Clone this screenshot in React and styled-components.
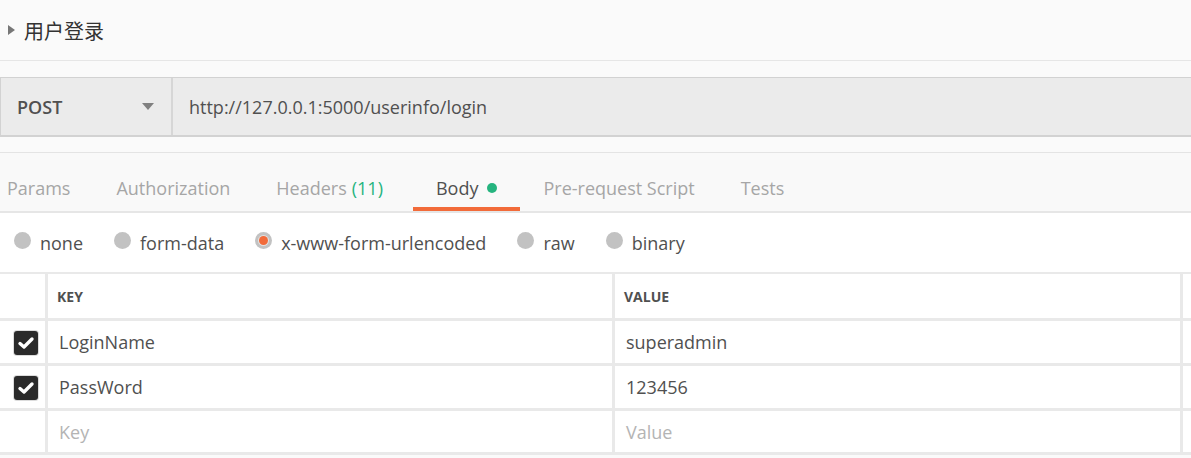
import styled, { createGlobalStyle } from 'styled-components'

const GlobalStyle = createGlobalStyle`
  html, body {
    margin: 0;
    padding: 0;
    background: #fafafa;
    font-family: "Open Sans", "Liberation Sans", sans-serif;
  }
  * { box-sizing: border-box; }
`

const Page = styled.div`
  width: 100%;
  overflow: hidden;
`

// ---- title ----
const TitleBar = styled.div`
  height: 61px;
  display: flex;
  align-items: center;
  padding-left: 8px;
  border-bottom: 1px solid #e6e6e6;
`
const Caret = styled.span`
  width: 0;
  height: 0;
  border-top: 5px solid transparent;
  border-bottom: 5px solid transparent;
  border-left: 7px solid #777;
  margin-right: 9px;
`
const Title = styled.span`
  font-family: "Noto Sans CJK SC", "Open Sans", sans-serif;
  font-size: 20px;
  color: #333;
`

// ---- request bar ----
const RequestSection = styled.div`
  padding: 16px 0 15px;
  border-bottom: 1px solid #e4e4e4;
`
const RequestBar = styled.div`
  height: 60px;
  display: flex;
  background: #ebebeb;
  border-top: 1px solid #d2d2d2;
  border-bottom: 2px solid #d2d2d2;
  border-left: 1px solid #d2d2d2;
`
const Method = styled.div`
  width: 172px;
  display: flex;
  align-items: center;
  justify-content: space-between;
  padding: 0 17px 0 16px;
  font-size: 18px;
  font-weight: 600;
  color: #505050;
  border-right: 2px solid #d6d6d6;
`
const DropArrow = styled.span`
  width: 0;
  height: 0;
  border-left: 6px solid transparent;
  border-right: 6px solid transparent;
  border-top: 7px solid #808080;
`
const Url = styled.div`
  flex: 1;
  display: flex;
  align-items: center;
  padding-left: 16px;
  font-size: 18px;
  color: #505050;
`

// ---- tabs ----
const TabBar = styled.div`
  height: 60px;
  display: flex;
  background: #f9f9f9;
  border-bottom: 2px solid #e6e6e6;
`
const Tab = styled.div`
  display: flex;
  align-items: center;
  padding: 15px 23px 0;
  font-size: 18px;
  color: ${p => (p.$active ? '#505050' : '#a6a6a6')};
  border-bottom: 4px solid ${p => (p.$active ? '#f26b3a' : 'transparent')};
  &:first-child { padding-left: 7px; }
`
const Count = styled.span`
  color: #26b47f;
  margin-left: 5px;
  margin-right: 7px;
`
const Dot = styled.span`
  width: 10px;
  height: 10px;
  border-radius: 50%;
  background: #26b47f;
  margin-left: 9px;
`

// ---- body types ----
const BodyTypes = styled.div`
  height: 59px;
  display: flex;
  align-items: center;
  padding-left: 14px;
  background: #fff;
`
const RadioItem = styled.label`
  display: flex;
  align-items: center;
  margin-right: 31px;
  font-size: 18px;
  color: #505050;
`
const Radio = styled.span`
  position: relative;
  width: 17px;
  height: 17px;
  border-radius: 50%;
  background: #c2c2c2;
  margin: -4px 9px 0 0;
  &::after {
    content: '';
    display: ${p => (p.$checked ? 'block' : 'none')};
    position: absolute;
    left: 4px;
    top: 4px;
    width: 9px;
    height: 9px;
    border-radius: 50%;
    background: #f26b3a;
    box-shadow: 0 0 0 1px #e2e2e2;
  }
`

// ---- key/value table ----
const Table = styled.div`
  display: grid;
  grid-template-columns: 45px 564px 565px 1fr;
  grid-template-rows: 44px 42px 42px 41px;
  gap: 3px;
  padding-bottom: 3px;
  background: #e9e9e9;
  border-top: 2px solid #e9e9e9;
  margin-bottom: 3px;
`
const HeadCell = styled.div`
  background: #fff;
  display: flex;
  align-items: center;
  padding-left: 9px;
  font-size: 14px;
  font-weight: 700;
  color: #505050;
`
const Cell = styled.div`
  background: #fff;
  display: flex;
  align-items: center;
  padding-left: 11px;
  font-size: 18px;
  color: ${p => (p.$placeholder ? '#b4b4b4' : '#505050')};
`
const CheckCell = styled.div`
  background: #fff;
  display: flex;
  align-items: center;
  padding: 2px 0 0 14px;
`
const CheckBox = styled.span`
  width: 24px;
  height: 24px;
  border-radius: 3px;
  background: #2a2a2a;
  box-shadow: 0 0 0 1px #dcdcdc;
  display: flex;
  align-items: center;
  justify-content: center;
`

const Check = () => (
  <CheckBox>
    <svg width="20" height="20" viewBox="0 0 20 20">
      <polyline points="4,10.5 8,14 16,6" fill="none" stroke="#fff" strokeWidth="3.4" strokeLinecap="round" strokeLinejoin="round" />
    </svg>
  </CheckBox>
)

const tabs = ['Params', 'Authorization', 'Headers', 'Body', 'Pre-request Script', 'Tests']
const bodyTypes = ['none', 'form-data', 'x-www-form-urlencoded', 'raw', 'binary']
const rows = [
  { key: 'LoginName', value: 'superadmin', on: true },
  { key: 'PassWord', value: '123456', on: true },
]

const App = () => {
  return (
    <Page>
      <GlobalStyle />
      <TitleBar>
        <Caret />
        <Title>用户登录</Title>
      </TitleBar>

      <RequestSection>
        <RequestBar>
          <Method>
            POST
            <DropArrow />
          </Method>
          <Url>http://127.0.0.1:5000/userinfo/login</Url>
        </RequestBar>
      </RequestSection>

      <TabBar>
        {tabs.map(t => (
          <Tab key={t} $active={t === 'Body'}>
            {t}
            {t === 'Headers' && <Count>(11)</Count>}
            {t === 'Body' && <Dot />}
          </Tab>
        ))}
      </TabBar>

      <BodyTypes>
        {bodyTypes.map(b => (
          <RadioItem key={b}>
            <Radio $checked={b === 'x-www-form-urlencoded'} />
            {b}
          </RadioItem>
        ))}
      </BodyTypes>

      <Table>
        <HeadCell />
        <HeadCell>KEY</HeadCell>
        <HeadCell>VALUE</HeadCell>
        <HeadCell />
        {rows.map(r => (
          <>
            <CheckCell>{r.on && <Check />}</CheckCell>
            <Cell>{r.key}</Cell>
            <Cell>{r.value}</Cell>
            <Cell />
          </>
        ))}
        <CheckCell />
        <Cell $placeholder>Key</Cell>
        <Cell $placeholder>Value</Cell>
        <Cell />
      </Table>
    </Page>
  )
}

export default App
